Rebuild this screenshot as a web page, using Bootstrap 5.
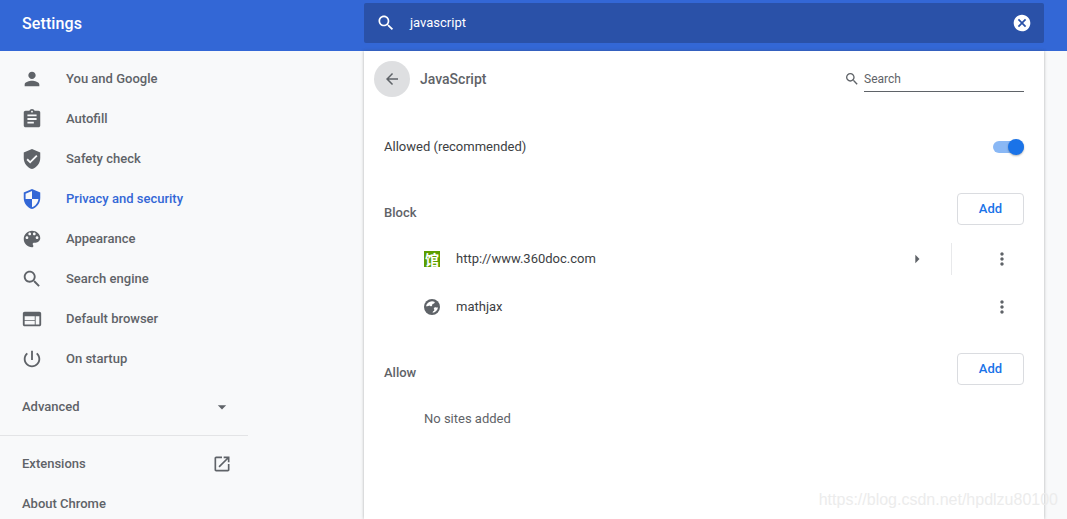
<!DOCTYPE html>
<html lang="en">
<head>
    <meta charset="UTF-8">
    <meta name="viewport" content="width=device-width, initial-scale=1, shrink-to-fit=no">
    <title>Settings - JavaScript</title>

    <link href="https://cdn.jsdelivr.net/npm/bootstrap@5.3.2/dist/css/bootstrap.min.css" rel="stylesheet">

    <style>
        html, body {
            height: 100%;
            overflow: hidden;
        }
        body {
            font-family: Roboto, "Liberation Sans", sans-serif;
            font-size: 13px;
            color: #5f6368;
            background-color: #f8f9fa;
        }
        svg {
            fill: currentColor;
            flex-shrink: 0;
            display: block;
        }
        .top-bar {
            height: 51px;
            background-color: #3367d6;
            color: #fff;
        }
        .top-title {
            width: 364px;
            height: 48px;
            padding-left: 22px;
            font-size: 16px;
            font-weight: 500;
            letter-spacing: .1px;
        }
        .top-search {
            width: 680px;
            height: 40px;
            margin-top: 3px;
            padding: 0 12px;
            background-color: #2a51a8;
            border-radius: 2px;
            font-size: 13px;
        }
        .top-search-text {
            margin-left: 14px;
        }
        .page-body {
            height: 468px;
        }
        .side-col {
            width: 364px;
            padding-top: 7px;
        }
        .side-inner {
            width: 248px;
        }
        .side-item {
            height: 40px;
            font-weight: 500;
            padding-top: 1px;
        }
        .side-icon {
            width: 66px;
            padding-left: 21px;
        }
        .side-item.is-active {
            color: #3367d6;
        }
        .side-plain {
            padding: 0 16px 0 22px;
        }
        .side-advanced {
            margin-top: 8px;
            padding-top: 2px;
        }
        .side-rule {
            margin-top: 9px;
            margin-bottom: 8px;
            border-top: 1px solid #e3e4e6;
        }
        .main-panel {
            width: 680px;
            background-color: #fff;
            box-shadow: 0 0 3px rgba(60, 64, 67, .4);
            padding: 0 20px;
        }
        .sub-head {
            height: 56px;
        }
        .back-btn {
            width: 36px;
            height: 36px;
            margin-left: -10px;
            background-color: #dedfe1;
        }
        .sub-title {
            margin-left: 10px;
            font-size: 14px;
            font-weight: 500;
        }
        .sub-search {
            width: 160px;
            height: 25px;
            margin-left: 4px;
            border-bottom: 1px solid #5f6368;
            font-size: 12px;
        }
        .allow-row {
            height: 48px;
            margin-top: 16px;
            color: #3c4043;
        }
        .toggle-track {
            position: relative;
            width: 31px;
            height: 12px;
            background-color: #8ab8f5;
            border-radius: 6px;
        }
        .toggle-knob {
            position: absolute;
            top: -2px;
            right: 0;
            width: 16px;
            height: 16px;
            background-color: #1a73e8;
            border-radius: 50%;
            box-shadow: 0 1px 2px rgba(60, 64, 67, .4);
        }
        .section-row {
            height: 32px;
            font-weight: 500;
        }
        .section-label {
            padding-top: 8px;
        }
        .section-block {
            margin-top: 22px;
        }
        .section-allow {
            margin-top: 22px;
        }
        .add-btn {
            width: 67px;
            height: 32px;
            padding: 0;
            font-size: 13px;
            font-weight: 500;
            color: #1a73e8;
            background-color: #fff;
            border: 1px solid #dadce0;
            border-radius: 4px;
        }
        .site-list {
            margin-top: 10px;
        }
        .site-row {
            height: 48px;
            padding-left: 40px;
            color: #3c4043;
        }
        .site-icon {
            width: 16px;
            height: 16px;
            margin-right: 16px;
        }
        .site-favicon {
            background-color: #5b9e00;
            color: #fff;
            font-family: "Noto Sans CJK SC", sans-serif;
            font-size: 14px;
            font-weight: 700;
            line-height: 1;
        }
        .site-globe {
            color: #5f6368;
        }
        .site-arrow {
            color: #5f6368;
            margin-right: 24px;
        }
        .site-sep {
            width: 1px;
            height: 32px;
            background-color: #e8e9eb;
        }
        .site-more {
            width: 72px;
            padding-left: 40px;
            color: #5f6368;
        }
        .empty-row {
            height: 48px;
            margin-top: 10px;
            padding-left: 40px;
        }
        .water-mark {
            position: absolute;
            right: 9px;
            bottom: 7px;
            font-family: "Liberation Sans", sans-serif;
            font-size: 16px;
            color: #ececec;
            white-space: nowrap;
        }
    </style>
</head>
<body>

<div class="top-bar d-flex">
    <div class="top-title d-flex align-items-center">Settings</div>
    <div class="top-search d-flex align-items-center">
        <svg width="20" height="20" viewBox="0 0 24 24"><path d="M15.5 14h-.79l-.28-.27C15.41 12.59 16 11.11 16 9.5 16 5.91 13.09 3 9.5 3S3 5.91 3 9.5 5.91 16 9.5 16c1.61 0 3.09-.59 4.23-1.57l.27.28v.79l5 4.99L20.49 19l-4.99-5zm-6 0C7.01 14 5 11.99 5 9.5S7.01 5 9.5 5 14 7.01 14 9.5 11.99 14 9.5 14z"/></svg>
        <span class="top-search-text flex-grow-1">javascript</span>
        <svg width="20" height="20" viewBox="0 0 24 24"><path d="M12 2C6.47 2 2 6.47 2 12s4.47 10 10 10 10-4.47 10-10S17.53 2 12 2zm5 13.59L15.59 17 12 13.41 8.41 17 7 15.59 10.59 12 7 8.41 8.41 7 12 10.59 15.59 7 17 8.41 13.41 12 17 15.59z"/></svg>
    </div>
</div>

<div class="page-body d-flex">
    <div class="side-col">
        <div class="side-item d-flex align-items-center">
            <div class="side-icon"><svg width="22" height="22" viewBox="0 0 24 24"><path d="M12 12c2.21 0 4-1.79 4-4s-1.79-4-4-4-4 1.79-4 4 1.79 4 4 4zm0 2c-2.67 0-8 1.34-8 4v2h16v-2c0-2.66-5.33-4-8-4z"/></svg></div>
            You and Google
        </div>
        <div class="side-item d-flex align-items-center">
            <div class="side-icon"><svg width="22" height="22" viewBox="0 0 24 24"><path d="M19 3h-4.18C14.4 1.84 13.3 1 12 1c-1.3 0-2.4.84-2.82 2H5c-1.1 0-2 .9-2 2v14c0 1.1.9 2 2 2h14c1.1 0 2-.9 2-2V5c0-1.1-.9-2-2-2zm-7 0c.55 0 1 .45 1 1s-.45 1-1 1-1-.45-1-1 .45-1 1-1zm2 14H7v-2h7v2zm3-4H7v-2h10v2zm0-4H7V7h10v2z"/></svg></div>
            Autofill
        </div>
        <div class="side-item d-flex align-items-center">
            <div class="side-icon"><svg width="22" height="22" viewBox="0 0 24 24"><path d="M12 1L3 5v6c0 5.55 3.84 10.74 9 12 5.16-1.26 9-6.45 9-12V5l-9-4zm-2 16l-4-4 1.41-1.41L10 14.17l6.59-6.59L18 9l-8 8z"/></svg></div>
            Safety check
        </div>
        <div class="side-item is-active d-flex align-items-center">
            <div class="side-icon"><svg width="22" height="22" viewBox="0 0 24 24"><path d="M12 1L3 5v6c0 5.55 3.84 10.74 9 12 5.16-1.26 9-6.45 9-12V5l-9-4zm0 10.99h7c-.53 4.12-3.28 7.79-7 8.94V12H5V6.3l7-3.11v8.8z"/></svg></div>
            Privacy and security
        </div>
        <div class="side-item d-flex align-items-center">
            <div class="side-icon"><svg width="22" height="22" viewBox="0 0 24 24"><path d="M12 3c-4.97 0-9 4.03-9 9s4.03 9 9 9c.83 0 1.5-.67 1.5-1.5 0-.39-.15-.74-.39-1.01-.23-.26-.38-.61-.38-.99 0-.83.67-1.5 1.5-1.5H16c2.76 0 5-2.24 5-5 0-4.42-4.03-8-9-8zm-5.5 9c-.83 0-1.5-.67-1.5-1.5S5.67 9 6.5 9 8 9.67 8 10.5 7.33 12 6.5 12zm3-4C8.67 8 8 7.33 8 6.5S8.67 5 9.5 5s1.5.67 1.5 1.5S10.33 8 9.5 8zm5 0c-.83 0-1.5-.67-1.5-1.5S13.67 5 14.5 5s1.5.67 1.5 1.5S15.33 8 14.5 8zm3 4c-.83 0-1.5-.67-1.5-1.5S16.67 9 17.5 9s1.5.67 1.5 1.5-.67 1.5-1.5 1.5z"/></svg></div>
            Appearance
        </div>
        <div class="side-item d-flex align-items-center">
            <div class="side-icon"><svg width="22" height="22" viewBox="0 0 24 24"><path d="M15.5 14h-.79l-.28-.27C15.41 12.59 16 11.11 16 9.5 16 5.91 13.09 3 9.5 3S3 5.91 3 9.5 5.91 16 9.5 16c1.61 0 3.09-.59 4.23-1.57l.27.28v.79l5 4.99L20.49 19l-4.99-5zm-6 0C7.01 14 5 11.99 5 9.5S7.01 5 9.5 5 14 7.01 14 9.5 11.99 14 9.5 14z"/></svg></div>
            Search engine
        </div>
        <div class="side-item d-flex align-items-center">
            <div class="side-icon"><svg width="22" height="22" viewBox="0 0 24 24"><path d="M20 4H4c-1.1 0-1.99.9-1.99 2L2 18c0 1.1.9 2 2 2h16c1.1 0 2-.9 2-2V6c0-1.1-.9-2-2-2zm-5 14H4v-4h11v4zm0-5H4V9h11v4zm5 5h-4V9h4v9z"/></svg></div>
            Default browser
        </div>
        <div class="side-item d-flex align-items-center">
            <div class="side-icon"><svg width="22" height="22" viewBox="0 0 24 24"><path d="M13 3h-2v10h2V3zm4.83 2.17l-1.42 1.42C17.99 7.86 19 9.81 19 12c0 3.87-3.13 7-7 7s-7-3.13-7-7c0-2.19 1.01-4.14 2.58-5.42L6.17 5.17C4.23 6.82 3 9.26 3 12c0 4.97 4.03 9 9 9s9-4.03 9-9c0-2.74-1.23-5.18-3.17-6.83z"/></svg></div>
            On startup
        </div>

        <div class="side-inner">
            <div class="side-item side-plain side-advanced d-flex align-items-center justify-content-between">
                Advanced
                <svg width="20" height="20" viewBox="0 0 24 24"><path d="M7 10l5 5 5-5z"/></svg>
            </div>
            <div class="side-rule"></div>
            <div class="side-item side-plain d-flex align-items-center justify-content-between">
                Extensions
                <svg width="20" height="20" viewBox="0 0 24 24"><path d="M19 19H5V5h7V3H5c-1.11 0-2 .9-2 2v14c0 1.1.89 2 2 2h14c1.1 0 2-.9 2-2v-7h-2v7zM14 3v2h3.59l-9.83 9.83 1.41 1.41L19 6.41V10h2V3h-7z"/></svg>
            </div>
            <div class="side-item side-plain d-flex align-items-center">About Chrome</div>
        </div>
    </div>

    <div class="main-panel">
        <div class="sub-head d-flex align-items-center">
            <div class="back-btn rounded-circle d-flex align-items-center justify-content-center">
                <svg width="18" height="18" viewBox="0 0 24 24"><path d="M20 11H7.83l5.59-5.59L12 4l-8 8 8 8 1.41-1.41L7.83 13H20v-2z"/></svg>
            </div>
            <div class="sub-title flex-grow-1">JavaScript</div>
            <svg width="16" height="16" viewBox="0 0 24 24"><path d="M15.5 14h-.79l-.28-.27C15.41 12.59 16 11.11 16 9.5 16 5.91 13.09 3 9.5 3S3 5.91 3 9.5 5.91 16 9.5 16c1.61 0 3.09-.59 4.23-1.57l.27.28v.79l5 4.99L20.49 19l-4.99-5zm-6 0C7.01 14 5 11.99 5 9.5S7.01 5 9.5 5 14 7.01 14 9.5 11.99 14 9.5 14z"/></svg>
            <div class="sub-search d-flex align-items-center">Search</div>
        </div>

        <div class="allow-row d-flex align-items-center justify-content-between">
            Allowed (recommended)
            <span class="toggle-track"><span class="toggle-knob"></span></span>
        </div>

        <div class="section-row section-block d-flex align-items-center justify-content-between">
            <span class="section-label">Block</span>
            <button type="button" class="btn add-btn">Add</button>
        </div>
        <div class="site-list">
            <div class="site-row d-flex align-items-center">
                <div class="site-icon site-favicon d-flex align-items-center justify-content-center">馆</div>
                <div class="flex-grow-1">http://www.360doc.com</div>
                <svg class="site-arrow" width="20" height="20" viewBox="0 0 24 24"><path d="M10 7l5 5-5 5z"/></svg>
                <div class="site-sep"></div>
                <div class="site-more"><svg width="20" height="20" viewBox="0 0 24 24"><path d="M12 8c1.1 0 2-.9 2-2s-.9-2-2-2-2 .9-2 2 .9 2 2 2zm0 2c-1.1 0-2 .9-2 2s.9 2 2 2 2-.9 2-2-.9-2-2-2zm0 6c-1.1 0-2 .9-2 2s.9 2 2 2 2-.9 2-2-.9-2-2-2z"/></svg></div>
            </div>
            <div class="site-row d-flex align-items-center">
                <svg class="site-icon site-globe" viewBox="0 0 16 16">
                    <circle cx="8" cy="8" r="8"/>
                    <path fill="#fff" d="M2 7.2C2.6 4.4 5 2.4 8 2.2c1 0 2 .3 2.8.7-.1 1-.8 1.7-1.8 1.9-.6.1-.8.6-.8 1.1 0 .8-.6 1.3-1.4 1.3-.6 0-1-.3-1.4-.7-.8.5-1.7.8-2.6.7zM14 8.6c-.4 2.8-2.6 5-5.4 5.2 0-1 .6-1.8 1.5-2.1.3-.7.2-1.7-.4-2.4.6-1 1.6-1.2 2.4-.9.6.2 1.2.2 1.9.2z"/>
                </svg>
                <div class="flex-grow-1">mathjax</div>
                <div class="site-more"><svg width="20" height="20" viewBox="0 0 24 24"><path d="M12 8c1.1 0 2-.9 2-2s-.9-2-2-2-2 .9-2 2 .9 2 2 2zm0 2c-1.1 0-2 .9-2 2s.9 2 2 2 2-.9 2-2-.9-2-2-2zm0 6c-1.1 0-2 .9-2 2s.9 2 2 2 2-.9 2-2-.9-2-2-2z"/></svg></div>
            </div>
        </div>

        <div class="section-row section-allow d-flex align-items-center justify-content-between">
            <span class="section-label">Allow</span>
            <button type="button" class="btn add-btn">Add</button>
        </div>
        <div class="empty-row d-flex align-items-center">No sites added</div>
    </div>
</div>

<div class="water-mark">https://blog.csdn.net/hpdlzu80100</div>

<script src="https://cdn.jsdelivr.net/npm/bootstrap@5.3.2/dist/js/bootstrap.bundle.min.js"></script>
</body>
</html>
